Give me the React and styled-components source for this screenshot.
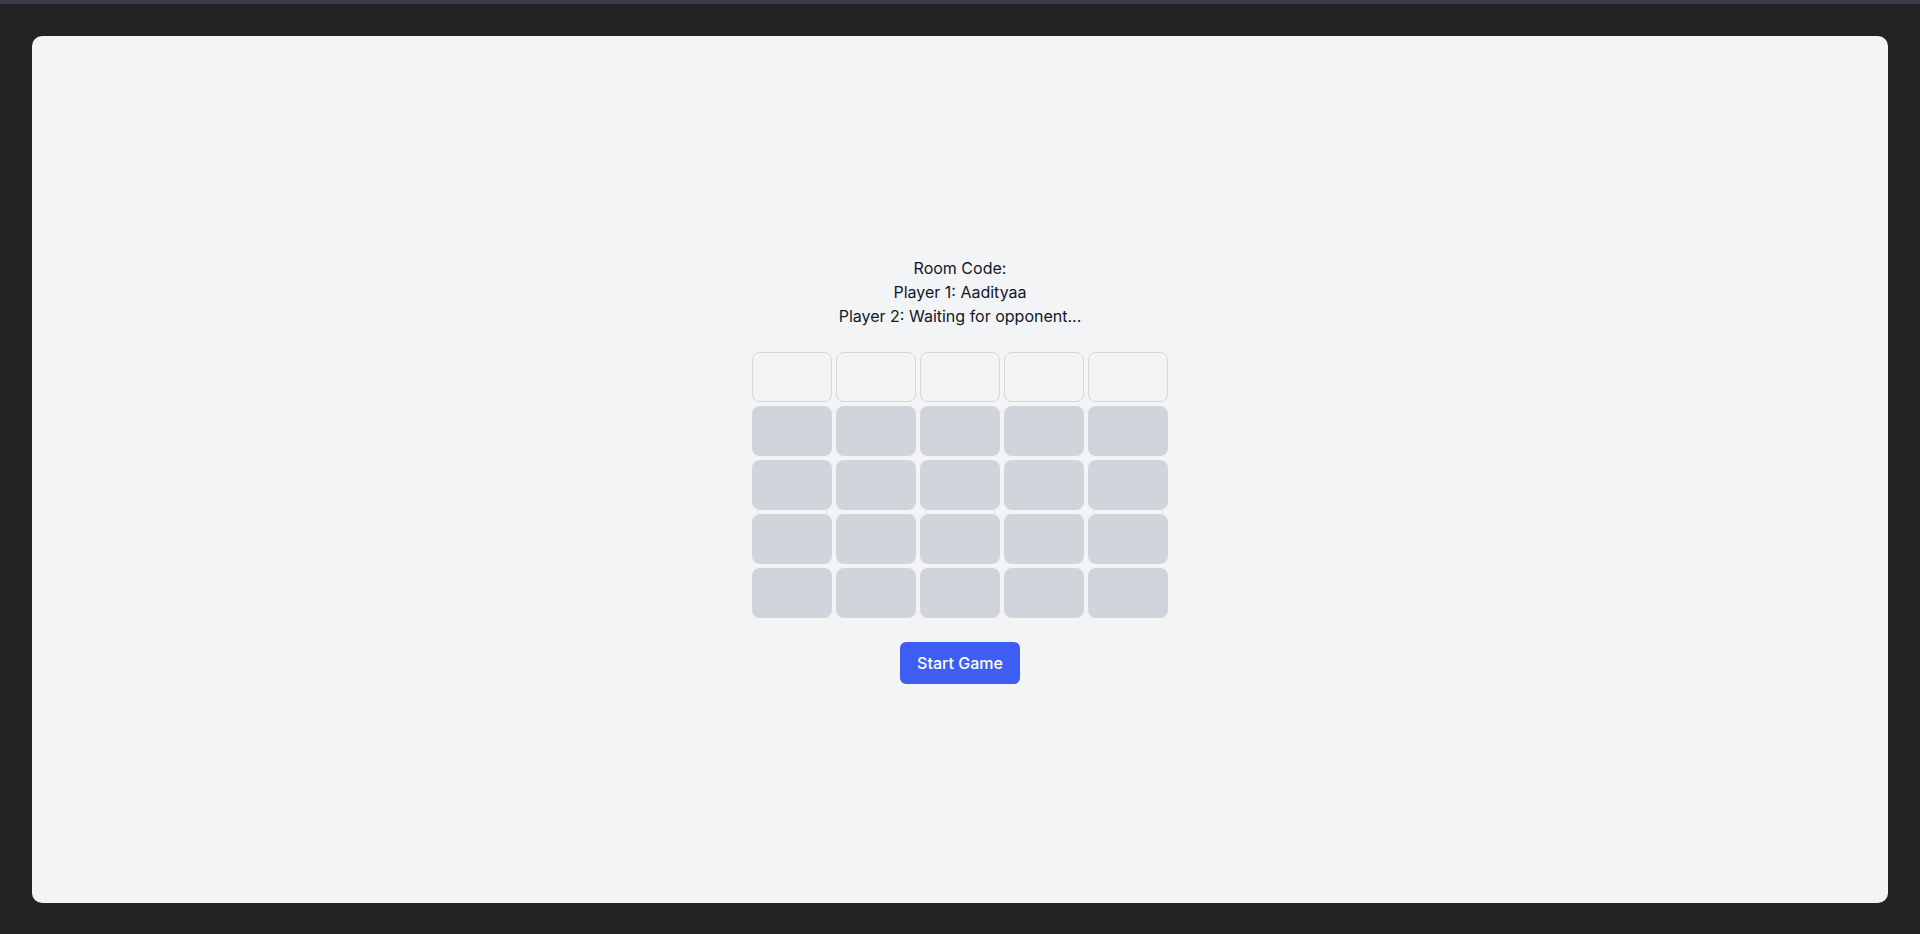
import React from "react";
import styled, { createGlobalStyle } from "styled-components";

const Global = createGlobalStyle`
    html, body {
        margin: 0;
        padding: 0;
        height: 100%;
        background-color: #232323;
        font-family: Inter, "Noto Sans", sans-serif;
    }
    #root {
        height: 100%;
    }
`

export default function App() {
    const rows = 5, cols = 5;
    return <Page>
        <Global/>
        <TopBar/>
        <Frame>
            <Panel>
                <Info>
                    <Line>Room Code: </Line>
                    <Line>Player 1: Aadityaa</Line>
                    <Line>Player 2: Waiting for opponent...</Line>
                </Info>
                <Board>
                    {
                        (new Array(rows * cols)).fill(null).map((_, i) => (
                            <Cell key={i} input={(i < cols) + ""}/>
                        ))
                    }
                </Board>
                <StartButton>Start Game</StartButton>
            </Panel>
        </Frame>
    </Page>
}

const Page = styled.div`
    height: 100vh;
    display: flex;
    flex-direction: column;
    box-sizing: border-box;
`

const TopBar = styled.div`
    height: 4px;
    background-color: #3b3c46;
    flex-shrink: 0;
`

const Frame = styled.div`
    flex: 1;
    padding: 32px 32px 31px;
    display: flex;
    box-sizing: border-box;
    min-height: 0;
`

const Panel = styled.div`
    flex: 1;
    background-color: #f3f4f6;
    border-radius: 10px;
    display: flex;
    flex-direction: column;
    align-items: center;
    justify-content: center;
`

const Info = styled.div`
    display: flex;
    flex-direction: column;
    align-items: center;
    margin-bottom: 24px;
`

const Line = styled.div`
    font-size: 16px;
    line-height: 24px;
    color: #111827;
`

const Board = styled.div`
    display: grid;
    grid-template-columns: repeat(5, 80px);
    grid-auto-rows: 50px;
    gap: 4px;
`

const Cell = styled.div`
    box-sizing: border-box;
    border-radius: 8px;
    background-color: ${p => p.input == "true" ? "#f4f4f5" : "#d1d5db"};
    border: ${p => p.input == "true" ? "1px solid #d4d6da" : "none"};
`

const StartButton = styled.button`
    margin-top: 24px;
    width: 120px;
    height: 42px;
    border: none;
    border-radius: 6px;
    background-color: #3e5ef3;
    color: white;
    font-family: Inter, "Noto Sans", sans-serif;
    font-size: 16px;
    font-weight: 500;
    cursor: pointer;
`
